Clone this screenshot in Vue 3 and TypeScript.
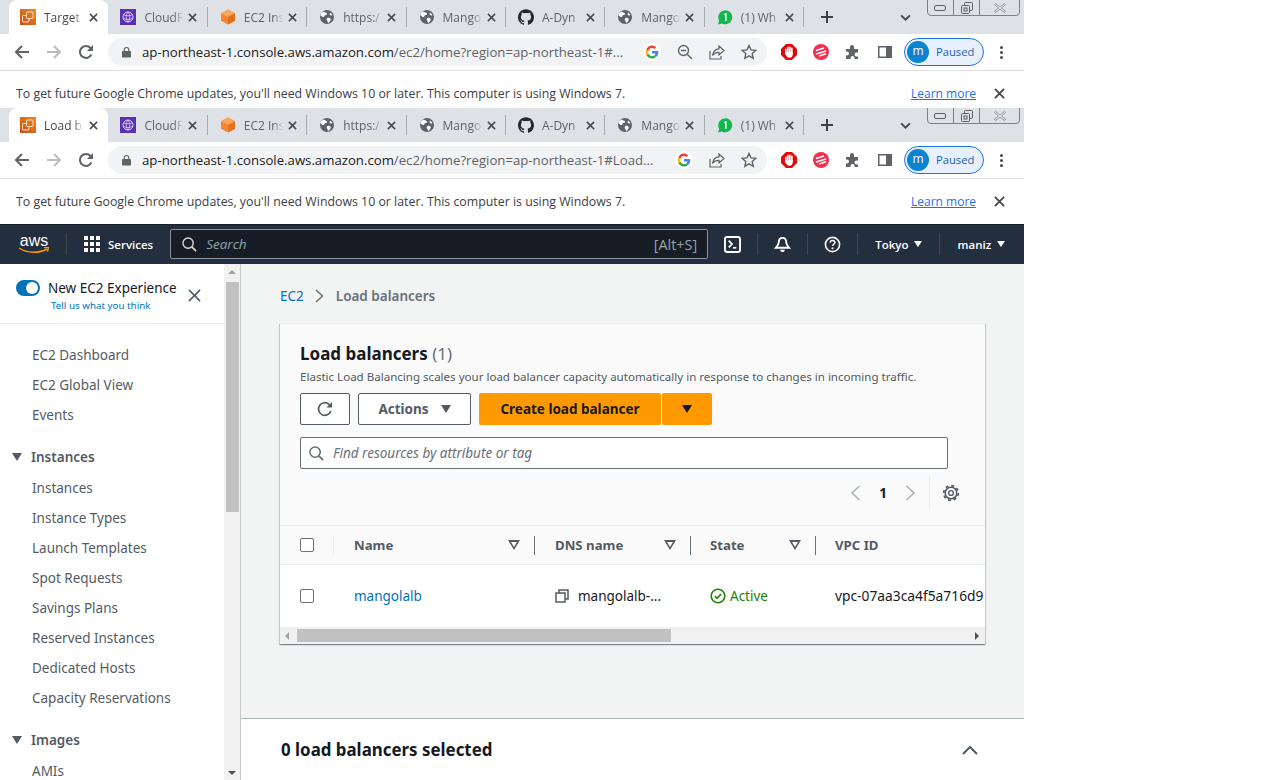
<script setup lang="ts">
interface Tab {
  icon: string
  title: string
}

const otherTabs: Tab[] = [
  { icon: 'cloudfront', title: 'CloudF' },
  { icon: 'cube', title: 'EC2 Ins' },
  { icon: 'globe', title: 'https:/' },
  { icon: 'globe', title: 'Mango' },
  { icon: 'github', title: 'A-Dyn' },
  { icon: 'globe', title: 'Mango ' },
  { icon: 'whatsapp', title: '(1) Wh' },
]

const browsers = [
  {
    active: 'Target',
    url: 'ap-northeast-1.console.aws.amazon.com/ec2/home?region=ap-northeast-1#...',
    zoomIcon: true,
    clipped: true,
  },
  {
    active: 'Load b',
    url: 'ap-northeast-1.console.aws.amazon.com/ec2/home?region=ap-northeast-1#Load...',
    zoomIcon: false,
    clipped: false,
  },
]

const topLinks = ['EC2 Dashboard', 'EC2 Global View', 'Events']
const instanceLinks = [
  'Instances',
  'Instance Types',
  'Launch Templates',
  'Spot Requests',
  'Savings Plans',
  'Reserved Instances',
  'Dedicated Hosts',
  'Capacity Reservations',
]
</script>

<template>
  <div class="page">
    <div v-for="b in browsers" :key="b.active" class="browser" :class="{ clipped: b.clipped }">
      <div class="tabstrip">
        <div class="tab active">
          <svg class="fav" viewBox="0 0 16 16">
            <defs>
              <linearGradient id="tg" x1="0" y1="1" x2="1" y2="0">
                <stop offset="0" stop-color="#c8511b" />
                <stop offset="1" stop-color="#f08a1d" />
              </linearGradient>
            </defs>
            <rect width="16" height="16" fill="url(#tg)" />
            <rect x="2.5" y="6.5" width="6.5" height="6.5" rx="1" fill="none" stroke="#fbe0c8" />
            <rect x="6.5" y="3" width="6.5" height="6.5" rx="1" fill="#e0741d" stroke="#fbe0c8" />
          </svg>
          <span class="tab-title">{{ b.active }}</span>
          <svg class="tab-x" viewBox="0 0 10 10"><path d="M1 1l8 8M9 1l-8 8" /></svg>
        </div>
        <div v-for="t in otherTabs" :key="t.title + t.icon" class="tab">
          <svg v-if="t.icon === 'cloudfront'" class="fav" viewBox="0 0 16 16">
            <rect width="16" height="16" fill="#5a30b5" />
            <circle cx="8" cy="8" r="5" fill="none" stroke="#e3d8f8" />
            <path d="M8 3c-2.4 3-2.4 7 0 10M8 3c2.4 3 2.4 7 0 10M4 5.800c2.600 1.400 5.400 1.400 8 0M3.500 9.500c3 1.300 6 1.300 9 0" fill="none" stroke="#e3d8f8" stroke-width=".8" />
          </svg>
          <svg v-else-if="t.icon === 'cube'" class="fav" viewBox="0 0 16 16">
            <path d="M8 .5l7 3.700v7.600l-7 3.700-7-3.700V4.200z" fill="#f58534" />
            <path d="M8 .5l7 3.700-7 3.800-7-3.800z" fill="#f9a65a" />
            <path d="M8 8l7-3.800v7.600l-7 3.700z" fill="#e3701f" />
          </svg>
          <svg v-else-if="t.icon === 'globe'" class="fav" viewBox="0 0 16 16">
            <circle cx="8" cy="8" r="7" fill="#5f6368" />
            <path d="M4.500 2.500c1 1 2.800.8 3.500 2 .5 1-1 1.500-2 1.800-1 .4-.4 1.700-1.500 1.700-1.200 0-2-1-3-1.800.3-1.600 1.300-3 3-3.700zM8.500 9c1.200-.5 3 .2 3.200 1.200.2 1.100-1.200 3-2.500 3.700-.8-.6-.4-1.800-1.200-2.600-.5-.7-.3-1.900.5-2.300zM11 3.500l2.500 2.300-1.500 1-1.500-1.300z" fill="#fff" />
          </svg>
          <svg v-else-if="t.icon === 'github'" class="fav" viewBox="0 0 24 24">
            <path fill="#24292e" d="M12 .297c-6.630 0-12 5.373-12 12 0 5.303 3.438 9.800 8.205 11.385.600.113.820-.258.820-.577 0-.285-.010-1.040-.015-2.040-3.338.724-4.042-1.610-4.042-1.610C4.422 18.070 3.633 17.700 3.633 17.700c-1.087-.744.084-.729.084-.729 1.205.084 1.838 1.236 1.838 1.236 1.070 1.835 2.809 1.305 3.495.998.108-.776.417-1.305.760-1.605-2.665-.300-5.466-1.332-5.466-5.930 0-1.310.465-2.380 1.235-3.220-.135-.303-.540-1.523.105-3.176 0 0 1.005-.322 3.300 1.230.960-.267 1.980-.399 3-.405 1.020.006 2.040.138 3 .405 2.280-1.552 3.285-1.230 3.285-1.230.645 1.653.240 2.873.120 3.176.765.840 1.230 1.910 1.230 3.220 0 4.610-2.805 5.625-5.475 5.920.420.360.810 1.096.810 2.220 0 1.606-.015 2.896-.015 3.286 0 .315.210.690.825.570C20.565 22.092 24 17.592 24 12.297c0-6.627-5.373-12-12-12" />
          </svg>
          <svg v-else class="fav" viewBox="0 0 16 16">
            <path d="M1 15.500l1.100-3.800a7 7 0 1 1 2.700 2.700z" fill="#12b84a" />
            <path d="M6.700 5.400L8.600 4h1v8H8V6z" fill="#fff" />
          </svg>
          <span class="tab-title">{{ t.title }}</span>
          <svg class="tab-x" viewBox="0 0 10 10"><path d="M1 1l8 8M9 1l-8 8" /></svg>
        </div>
        <svg class="new-tab" viewBox="0 0 12 12"><path d="M6 0v12M0 6h12" /></svg>
        <svg class="tab-search" viewBox="0 0 10 6"><path d="M1 1l4 4 4-4" /></svg>
        <div class="win-btns">
          <span class="win-btn"><svg width="14" height="8" viewBox="0 0 14 8"><rect x=".5" y="1.500" width="11" height="5" rx="1.500" /></svg></span>
          <span class="win-btn restore"><svg width="14" height="12" viewBox="0 0 14 12"><rect x="4.500" y=".5" width="8" height="8" rx="1" /><rect x="1.500" y="3.500" width="8" height="8" rx="1" fill="#dee1e6" /><rect x="4" y="6" width="3" height="3" /></svg></span>
          <span class="win-btn close"><svg width="12" height="10" viewBox="0 0 12 10"><path d="M1.500.5L6 4l4.500-3.500 1 1L7.500 5l4 3-1 1.500L6 6.200 1.500 9.500l-1-1.500 4-3-4-3.500z" /></svg></span>
        </div>
      </div>

      <div class="toolbar">
        <svg class="nav-ic" viewBox="0 0 16 16"><path d="M15 8H2M8 2L2 8l6 6" fill="none" stroke="#5f6368" stroke-width="2" /></svg>
        <svg class="nav-ic" viewBox="0 0 16 16"><path d="M1 8h13M8 2l6 6-6 6" fill="none" stroke="#babcbe" stroke-width="2" /></svg>
        <svg class="nav-ic" viewBox="0 0 16 16"><path d="M13.400 10.500A6 6 0 1 1 12.500 4L14.500 6" fill="none" stroke="#5f6368" stroke-width="2" /><path d="M15 1v6H9z" fill="#5f6368" /></svg>
        <div class="omnibox">
          <svg class="lock" viewBox="0 0 10 12"><path d="M2.500 5V3.500a2.500 2.500 0 0 1 5 0V5" fill="none" stroke="#5f6368" stroke-width="1.300" /><rect y="5" width="10" height="7" rx="1" fill="#5f6368" /></svg>
          <span class="url">{{ b.url.split('/ec2')[0] }}<span class="url-dim">/ec2{{ b.url.split('/ec2')[1] }}</span></span>
          <svg class="omni-ic g" viewBox="0 0 18 18">
            <circle cx="9" cy="9" r="9" fill="#fff" />
            <path d="M15.300 9.200c0-.5 0-.9-.1-1.300H9v2.500h3.500a3 3 0 0 1-1.300 2l2 1.600c1.300-1.200 2.100-2.900 2.100-4.800z" fill="#4285f4" />
            <path d="M9 15.500c1.700 0 3.200-.6 4.200-1.500l-2-1.600c-.6.400-1.300.6-2.200.6-1.700 0-3.100-1.100-3.600-2.600l-2.100 1.600a6.500 6.500 0 0 0 5.700 3.500z" fill="#34a853" />
            <path d="M5.400 10.900a3.900 3.900 0 0 1 0-2.800L3.300 6.500a6.500 6.500 0 0 0 0 5.900z" fill="#fbbc05" />
            <path d="M9 5.100c.9 0 1.800.3 2.400.9l1.800-1.800A6.300 6.300 0 0 0 9 2.500a6.500 6.500 0 0 0-5.700 4l2.100 1.600C5.900 6.300 7.300 5.100 9 5.100z" fill="#ea4335" />
          </svg>
          <svg v-if="b.zoomIcon" class="omni-ic" viewBox="0 0 16 16"><circle cx="6.500" cy="6.500" r="5" fill="none" stroke="#5f6368" stroke-width="1.400" /><path d="M10.200 10.200L15 15M4 6.500h5" stroke="#5f6368" stroke-width="1.400" /></svg>
          <svg class="omni-ic" viewBox="0 0 16 16"><path d="M1 7v8h11v-3" fill="none" stroke="#5f6368" stroke-width="1.200" /><path d="M10 2l5 4.500-5 4.500V8.300C7 8.300 5 9 3.500 11.500 4 7.500 6.500 5 10 4.800z" fill="none" stroke="#5f6368" stroke-width="1.200" /></svg>
          <svg class="omni-ic" viewBox="0 0 16 16"><path d="M8 1.500l2 4.400 4.800.5-3.600 3.200 1 4.700L8 11.900l-4.200 2.400 1-4.700L1.200 6.400 6 5.900z" fill="none" stroke="#5f6368" stroke-width="1.400" /></svg>
        </div>
        <svg class="ext" viewBox="0 0 16 16">
          <path d="M5 0h6l5 5v6l-5 5H5l-5-5V5z" fill="#e10a0a" />
          <g fill="#fff">
            <rect x="4" y="4.500" width="1.700" height="6" rx=".8" />
            <rect x="6" y="2.800" width="1.700" height="7" rx=".8" />
            <rect x="8" y="2.500" width="1.700" height="7" rx=".8" />
            <rect x="10" y="3.500" width="1.700" height="7" rx=".8" />
            <path d="M4 8h7.700v2.500c0 2-1.300 3.300-3.200 3.300-1.800 0-2.600-1-3.300-2.300L4 9.500z" />
          </g>
        </svg>
        <svg class="ext" viewBox="0 0 16 16"><circle cx="8" cy="8" r="8" fill="#f0304f" /><path d="M3 6.500l8-2.500M3 10l10-3M6 12l7-2.200" stroke="#fff" stroke-width="1.500" /></svg>
        <svg class="ext" viewBox="0 0 16 16"><path d="M1 5h4V3a2 2 0 0 1 4 0v2h4v3.500h-1.500a2 2 0 0 0 0 4H13V15H9.500v-1a2 2 0 0 0-4 0v1H1v-3.500h1a2 2 0 0 0 0-4H1z" fill="#5f6368" /></svg>
        <svg class="ext" viewBox="0 0 16 16"><rect x="1" y="2" width="14" height="12" fill="#5f6368" /><rect x="2.500" y="3.500" width="6.500" height="9" fill="#fff" /></svg>
        <div class="profile">
          <span class="avatar">m</span>
          <span class="paused">Paused</span>
        </div>
        <div class="menu-dots"><i></i><i></i><i></i></div>
      </div>

      <div class="infobar">
        <span class="info-text">To get future Google Chrome updates, you'll need Windows 10 or later. This computer is using Windows 7.</span>
        <a class="learn">Learn more</a>
        <svg class="info-x" viewBox="0 0 12 12"><path d="M1 1l10 10M11 1L1 11" /></svg>
      </div>
    </div>

    <header class="awsnav">
      <div class="aws-logo">
        <span>aws</span>
        <svg viewBox="0 0 32 7" width="32" height="7"><path d="M1 1c8 5.500 20 5.500 28 1" fill="none" stroke="#ff9900" stroke-width="1.500" /><path d="M26 .5l4.500 0-1 4" fill="none" stroke="#ff9900" stroke-width="1.300" /></svg>
      </div>
      <span class="nav-sep first"></span>
      <div class="grid-ic"><i v-for="n in 9" :key="n"></i></div>
      <span class="services">Services</span>
      <div class="aws-search">
        <svg width="15" height="15" viewBox="0 0 16 16"><circle cx="6.500" cy="6.500" r="5.500" fill="none" stroke="#d5dbdb" stroke-width="1.500" /><path d="M10.500 10.500L15 15" stroke="#d5dbdb" stroke-width="1.800" /></svg>
        <span class="search-ph">Search</span>
        <span class="search-key">[Alt+S]</span>
      </div>
      <svg class="nav-ic2 term" viewBox="0 0 18 18"><rect x="1" y="1" width="16" height="16" rx="2.500" fill="none" stroke="#fff" stroke-width="2" /><path d="M5 5l3.500 3.500L5 12" fill="none" stroke="#fff" stroke-width="1.800" /><path d="M9.500 12.500H13" stroke="#fff" stroke-width="1.800" /></svg>
      <span class="nav-sep"></span>
      <svg class="nav-ic2 bell" viewBox="0 0 18 18"><path d="M9 2c2.800 0 4 2.500 4 5 0 2 1.500 3.800 3 5.500H2C3.500 10.800 5 9 5 7c0-2.500 1.200-5 4-5z" fill="none" stroke="#fff" stroke-width="2" /><path d="M6.500 14.500c.3 1.800 1.300 2.500 2.500 2.500s2.200-.7 2.500-2.500" fill="#fff" /></svg>
      <span class="nav-sep"></span>
      <svg class="nav-ic2 help" viewBox="0 0 18 18"><circle cx="9" cy="9" r="7.500" fill="none" stroke="#fff" stroke-width="1.700" /><path d="M6.500 7c.1-1.500 1.200-2.200 2.500-2.200s2.500.8 2.500 2.100c0 1.900-2.500 1.800-2.500 3.800" fill="none" stroke="#fff" stroke-width="1.600" /><circle cx="9" cy="13" r="1.100" fill="#fff" /></svg>
      <span class="nav-sep"></span>
      <span class="menu-item tokyo">Tokyo<b class="caret"></b></span>
      <span class="nav-sep"></span>
      <span class="menu-item maniz">maniz<b class="caret"></b></span>
    </header>

    <div class="console">
      <aside class="sidebar">
        <div class="side-inner">
          <div class="exp">
            <span class="toggle"><i></i></span>
            <div class="exp-text">
              <div class="exp-title">New EC2 Experience</div>
              <div class="exp-link">Tell us what you think</div>
            </div>
            <svg class="exp-x" viewBox="0 0 14 14"><path d="M1 1l12 12M13 1L1 13" /></svg>
          </div>
          <nav class="side-nav">
            <a v-for="l in topLinks" :key="l" class="side-link">{{ l }}</a>
            <div class="side-head"><b class="tri"></b>Instances</div>
            <a v-for="l in instanceLinks" :key="l" class="side-link">{{ l }}</a>
            <div class="side-head"><b class="tri"></b>Images</div>
            <a class="side-link">AMIs</a>
          </nav>
        </div>
        <div class="vscroll">
          <b class="arrow up"></b>
          <div class="vthumb"></div>
          <b class="arrow down"></b>
        </div>
      </aside>

      <main class="main">
        <div class="crumbs">
          <a>EC2</a>
          <svg width="9" height="14" viewBox="0 0 9 14"><path d="M1 1l6.500 6L1 13" fill="none" stroke="#687078" stroke-width="1.500" /></svg>
          <span>Load balancers</span>
        </div>

        <section class="card">
          <div class="card-head">
            <h1>Load balancers <span>(1)</span></h1>
            <p>Elastic Load Balancing scales your load balancer capacity automatically in response to changes in incoming traffic.</p>
            <div class="actions">
              <button class="btn refresh">
                <svg width="16" height="16" viewBox="0 0 16 16"><path d="M13.800 10A6.300 6.300 0 1 1 12 3.300L14 5.300" fill="none" stroke="#545b64" stroke-width="1.700" /><path d="M15 1v5.500H9.500z" fill="#545b64" /></svg>
              </button>
              <button class="btn act">Actions<b class="caret dark"></b></button>
              <button class="btn primary create">Create load balancer</button>
              <button class="btn primary split"><b class="caret black"></b></button>
            </div>
            <div class="find">
              <svg width="15" height="15" viewBox="0 0 16 16"><circle cx="6.500" cy="6.500" r="5.500" fill="none" stroke="#687078" stroke-width="1.700" /><path d="M10.500 10.500L15 15" stroke="#687078" stroke-width="2" /></svg>
              <span>Find resources by attribute or tag</span>
            </div>
            <div class="pager">
              <svg width="11" height="16" viewBox="0 0 11 16"><path d="M9.500 1L2 8l7.500 7" fill="none" stroke="#aab7b8" stroke-width="1.700" /></svg>
              <span class="page-no">1</span>
              <svg width="11" height="16" viewBox="0 0 11 16"><path d="M1.500 1L9 8l-7.500 7" fill="none" stroke="#aab7b8" stroke-width="1.700" /></svg>
              <span class="pager-sep"></span>
              <svg width="18" height="18" viewBox="0 0 18 18">
                <circle cx="9" cy="9" r="5.800" fill="none" stroke="#545b64" stroke-width="1.500" />
                <circle cx="9" cy="9" r="7.300" fill="none" stroke="#545b64" stroke-width="1.800" stroke-dasharray="2.900 2.830" />
                <circle cx="9" cy="9" r="2.400" fill="none" stroke="#545b64" stroke-width="1.400" />
              </svg>
            </div>
          </div>

          <div class="table">
            <div class="row thead">
              <div class="cell check"><i class="box"></i><span class="soft-sep"></span></div>
              <div class="cell th">Name<b class="filter"></b></div>
              <div class="cell th">DNS name<b class="filter"></b></div>
              <div class="cell th tight">State<b class="filter"></b></div>
              <div class="cell th last tight">VPC ID</div>
            </div>
            <div class="row tbody">
              <div class="cell check"><i class="box"></i></div>
              <div class="cell"><a class="lb-link">mangolalb</a></div>
              <div class="cell dns">
                <svg width="14" height="14" viewBox="0 0 14 14"><rect x="4" y="1" width="9" height="9" fill="none" stroke="#545b64" stroke-width="1.500" /><rect x="1" y="4" width="9" height="9" fill="#fff" stroke="#545b64" stroke-width="1.500" /></svg>
                <span>mangolalb-...</span>
              </div>
              <div class="cell state tight">
                <svg width="16" height="16" viewBox="0 0 16 16"><circle cx="8" cy="8" r="6.800" fill="none" stroke="#1d8102" stroke-width="1.600" /><path d="M4.800 8l2.300 2.300 4-4.300" fill="none" stroke="#1d8102" stroke-width="1.600" /></svg>
                <span>Active</span>
              </div>
              <div class="cell vpc tight">vpc-07aa3ca4f5a716d9</div>
            </div>
          </div>

          <div class="hscroll">
            <b class="h-arrow left"></b>
            <div class="hthumb"></div>
            <b class="h-arrow right"></b>
          </div>
        </section>

        <div class="selected">
          <h2>0 load balancers selected</h2>
          <svg width="16" height="10" viewBox="0 0 16 10"><path d="M1 9l7-7 7 7" fill="none" stroke="#545b64" stroke-width="2" /></svg>
        </div>
      </main>
    </div>
  </div>
</template>

<style scoped>
.page {
  width: 1024px;
  height: 780px;
  overflow: hidden;
  display: flex;
  flex-direction: column;
  font-family: "Open Sans", "Liberation Sans", sans-serif;
}

/* browser chrome */
.browser {
  flex: none;
  height: 116px;
  overflow: hidden;
  background: #fff;
}
.browser.clipped {
  height: 108px;
}
.tabstrip {
  position: relative;
  height: 34px;
  display: flex;
  padding-left: 9px;
  background: #dee1e6;
}
.tab {
  position: relative;
  flex: none;
  width: 99.4px;
  height: 34px;
  display: flex;
  align-items: center;
  padding-left: 12px;
  box-sizing: border-box;
}
.tab::after {
  content: "";
  position: absolute;
  right: 0;
  top: 7px;
  height: 20px;
  width: 1px;
  background: #a7aaae;
}
.tab.active {
  padding-left: 11px;
  background: #fff;
  border-radius: 8px 8px 0 0;
}
.tab.active::after {
  display: none;
}
.fav {
  flex: none;
  width: 16px;
  height: 16px;
}
.tab-title {
  width: 41px;
  margin-left: 8px;
  overflow: hidden;
  white-space: nowrap;
  font-size: 12px;
  color: #5f6368;
  -webkit-mask-image: linear-gradient(to right, #000 72%, transparent 96%);
  mask-image: linear-gradient(to right, #000 72%, transparent 96%);
}
.tab.active .tab-title {
  color: #45484c;
}
.tab-x {
  flex: none;
  width: 9px;
  height: 9px;
  margin-left: 3px;
  fill: none;
  stroke: #45484c;
  stroke-width: 1.700;
}
.tab.active .tab-x {
  margin-left: 4px;
}
.new-tab {
  flex: none;
  width: 12px;
  height: 12px;
  align-self: center;
  margin-left: 17px;
  fill: none;
  stroke: #3c4043;
  stroke-width: 2;
}
.tab-search {
  flex: none;
  width: 11px;
  height: 7px;
  align-self: center;
  margin-left: 67px;
  fill: none;
  stroke: #45484c;
  stroke-width: 1.700;
}
.win-btns {
  position: absolute;
  top: -1px;
  left: 927px;
  width: 93px;
  height: 17px;
  display: flex;
  box-sizing: border-box;
  border: 1px solid #7d8084;
  border-radius: 0 0 4px 4px;
}
.win-btn {
  display: flex;
  align-items: center;
  justify-content: center;
  width: 25px;
  border-right: 1px solid #7d8084;
}
.win-btn.close {
  flex: 1;
  border-right: 0;
}
.win-btn svg {
  fill: none;
  stroke: #5b5e62;
}
.win-btn.close svg {
  fill: #eceef0;
  stroke: #7d8084;
  stroke-width: .8;
}
.toolbar {
  height: 36px;
  display: flex;
  align-items: center;
  box-sizing: content-box;
  border-bottom: 1px solid #dadce0;
  padding-left: 14px;
}
.nav-ic {
  flex: none;
  width: 16px;
  height: 16px;
  margin-right: 16px;
}
.omnibox {
  flex: none;
  width: 659px;
  height: 28px;
  margin-left: -2px;
  display: flex;
  align-items: center;
  padding: 0 10px 0 14px;
  box-sizing: border-box;
  border-radius: 14px;
  background: #f1f3f4;
}
.lock {
  flex: none;
  width: 9px;
  height: 12px;
}
.url {
  flex: 1;
  margin-left: 11px;
  min-width: 0;
  white-space: nowrap;
  font-size: 13.200px;
  color: #202124;
}
.url-dim {
  color: #5f6368;
}
.omni-ic {
  flex: none;
  width: 16px;
  height: 16px;
  margin-left: 16px;
}
.omni-ic.g {
  width: 18px;
  height: 18px;
}
.ext {
  flex: none;
  width: 16px;
  height: 16px;
  margin-right: 16px;
}
.omnibox + .ext {
  margin-left: 14px;
}
.profile {
  flex: none;
  width: 80px;
  height: 28px;
  margin-left: -5px;
  display: flex;
  align-items: center;
  box-sizing: border-box;
  border: 1px solid #1a73e8;
  border-radius: 14px;
  background: #e8f0fe;
}
.avatar {
  width: 22px;
  height: 22px;
  margin-left: 2px;
  border-radius: 50%;
  background: #0a84d0;
  color: #fff;
  font-size: 12px;
  line-height: 20px;
  text-align: center;
}
.paused {
  margin-left: 7px;
  padding-bottom: 1px;
  font-size: 11.200px;
  color: #1a5fb4;
}
.menu-dots {
  margin-left: 16px;
  display: flex;
  flex-direction: column;
  gap: 2px;
}
.menu-dots i {
  width: 3px;
  height: 3px;
  border-radius: 50%;
  background: #45484c;
}
.infobar {
  height: 45px;
  display: flex;
  align-items: center;
  padding-left: 16px;
  background: #fff;
}
.info-text {
  flex: none;
  width: 895px;
  font-size: 12.350px;
  color: #3c4043;
  white-space: nowrap;
}
.learn {
  flex: none;
  width: 83px;
  font-size: 12px;
  color: #1a73e8;
  text-decoration: underline;
}
.info-x {
  flex: none;
  width: 11px;
  height: 11px;
  fill: none;
  stroke: #45484c;
  stroke-width: 2;
}

/* aws top nav */
.awsnav {
  flex: none;
  height: 40px;
  box-sizing: border-box;
  display: flex;
  align-items: center;
  padding-bottom: 1px;
  background: #232f3e;
  border-top: 1px solid #161d26;
  color: #fff;
}
.aws-logo {
  width: 32px;
  margin-left: 18px;
  display: flex;
  flex-direction: column;
  align-items: center;
  color: #fff;
  line-height: 1;
}
.aws-logo span {
  font-family: "Liberation Sans", sans-serif;
  font-size: 16px;
  height: 12px;
  line-height: 11px;
}
.nav-sep {
  flex: none;
  width: 1px;
  height: 22px;
  background: #414750;
}
.nav-sep.first {
  margin-left: 16px;
}
.grid-ic {
  flex: none;
  margin-left: 17px;
  display: grid;
  grid-template-columns: repeat(3, 4px);
  gap: 2px;
}
.grid-ic i {
  width: 4px;
  height: 4px;
  background: #fff;
}
.services {
  margin-left: 8px;
  font-size: 11.500px;
  font-weight: 600;
}
.aws-search {
  flex: none;
  width: 538px;
  height: 30px;
  margin-left: 17px;
  box-sizing: border-box;
  display: flex;
  align-items: center;
  padding: 0 10px 0 11px;
  border: 1px solid #879596;
  border-radius: 2px;
  background: #161d26;
}
.search-ph {
  flex: 1;
  margin-left: 9px;
  font-size: 13.500px;
  font-style: italic;
  color: #95a5a6;
}
.search-key {
  font-size: 14.400px;
  color: #95a5a6;
}
.nav-ic2 {
  flex: none;
  width: 17px;
  height: 17px;
}
.term {
  margin: 0 16px;
}
.bell {
  margin: 0 16px;
}
.help {
  margin: 0 16px;
}
.menu-item {
  display: flex;
  align-items: center;
  font-size: 11.500px;
  font-weight: 600;
}
.tokyo {
  padding: 0 17px;
}
.maniz {
  padding-left: 17px;
}
.caret {
  display: block;
  width: 0;
  height: 0;
  margin-left: 6px;
  border-left: 4.500px solid transparent;
  border-right: 4.500px solid transparent;
  border-top: 6px solid #fff;
}
.caret.dark {
  margin-left: 12px;
  border-top-color: #545b64;
  border-left-width: 5.500px;
  border-right-width: 5.500px;
  border-top-width: 8px;
}
.caret.black {
  margin: 0;
  border-top-color: #16191f;
  border-left-width: 5.500px;
  border-right-width: 5.500px;
  border-top-width: 8px;
}

/* console body */
.console {
  flex: none;
  height: 516px;
  display: flex;
  background: #f2f3f3;
  color: #16191f;
  font-family: "Noto Sans", "Open Sans", sans-serif;
}
.sidebar {
  flex: none;
  width: 241px;
  height: 516px;
  display: flex;
  box-sizing: border-box;
  border-right: 1px solid #c6c8c8;
}
.side-inner {
  flex: none;
  width: 224px;
  background: #fff;
  overflow: hidden;
}
.exp {
  position: relative;
  height: 60px;
  box-sizing: border-box;
  padding: 16px 0 0 16px;
  display: flex;
  border-bottom: 1px solid #eaeded;
}
.toggle {
  flex: none;
  width: 24px;
  height: 16px;
  border-radius: 8px;
  background: #0073bb;
  position: relative;
}
.toggle i {
  position: absolute;
  right: 2px;
  top: 2px;
  width: 12px;
  height: 12px;
  border-radius: 50%;
  background: #fff;
}
.exp-text {
  margin-left: 8px;
}
.exp-title {
  font-size: 13.500px;
  line-height: 17px;
  color: #16191f;
  white-space: nowrap;
}
.exp-link {
  margin: 1px 0 0 3px;
  font-size: 9.800px;
  line-height: 16px;
  color: #0073bb;
  white-space: nowrap;
}
.exp-x {
  position: absolute;
  left: 188px;
  top: 25px;
  width: 13px;
  height: 13px;
  fill: none;
  stroke: #545b64;
  stroke-width: 1.700;
}
.side-nav {
  padding-top: 16px;
}
.side-link {
  display: block;
  height: 30px;
  padding-left: 32px;
  font-size: 13.500px;
  line-height: 30px;
  color: #545b64;
  white-space: nowrap;
}
.side-head {
  display: flex;
  align-items: center;
  height: 30px;
  margin: 12px 0 1px;
  padding-left: 12px;
  font-size: 13.500px;
  font-weight: 600;
  color: #545b64;
}
.tri {
  width: 0;
  height: 0;
  margin-right: 9px;
  border-left: 5.500px solid transparent;
  border-right: 5.500px solid transparent;
  border-top: 8px solid #545b64;
}
.vscroll {
  flex: none;
  width: 16px;
  display: flex;
  flex-direction: column;
  align-items: center;
  background: #f1f1f1;
}
.vthumb {
  width: 13px;
  height: 230px;
  margin-top: 8px;
  background: #c1c1c1;
}
.arrow {
  width: 0;
  height: 0;
  border-left: 4px solid transparent;
  border-right: 4px solid transparent;
}
.arrow.up {
  margin-top: 6px;
  border-bottom: 4px solid #a3a3a3;
}
.arrow.down {
  margin-top: auto;
  margin-bottom: 5px;
  border-top: 4px solid #505050;
}

.main {
  position: relative;
  flex: 1;
  min-width: 0;
  display: flex;
  flex-direction: column;
}
.crumbs {
  height: 59px;
  box-sizing: border-box;
  padding: 5px 0 0 39px;
  display: flex;
  align-items: center;
  font-size: 13.500px;
  color: #687078;
}
.crumbs a {
  color: #0073bb;
}
.crumbs svg {
  margin: 0 12px 0 11px;
}
.crumbs span {
  font-weight: 600;
}
.card {
  flex: none;
  width: 705px;
  margin-left: 39px;
  box-sizing: border-box;
  background: #fafafa;
  border-top: 1px solid #eaeded;
  box-shadow: 0 1px 1px 0 rgba(0, 28, 36, 0.3), 1px 1px 1px 0 rgba(0, 28, 36, 0.15), -1px 1px 1px 0 rgba(0, 28, 36, 0.15);
}
.card-head {
  height: 201px;
  box-sizing: border-box;
  padding: 18px 37px 0 20px;
}
.card-head h1 {
  margin: 0;
  font-size: 17px;
  line-height: 24px;
  font-weight: 700;
  color: #16191f;
}
.card-head h1 span {
  font-weight: 400;
  color: #687078;
}
.card-head p {
  margin: 2px 0 0;
  font-size: 11.550px;
  line-height: 18px;
  color: #545b64;
  white-space: nowrap;
}
.actions {
  margin-top: 7px;
  display: flex;
}
.btn {
  height: 32px;
  box-sizing: border-box;
  display: flex;
  align-items: center;
  justify-content: center;
  padding: 0;
  font-family: inherit;
  font-size: 13.500px;
  font-weight: 700;
  border-radius: 2px;
  border: 1px solid #545b64;
  background: #fff;
  color: #545b64;
}
.refresh {
  width: 50px;
}
.act {
  width: 113px;
  margin-left: 8px;
}
.primary {
  border: 0;
  background: #ff9900;
  color: #16191f;
}
.create {
  width: 182px;
  margin-left: 8px;
}
.split {
  width: 50px;
  margin-left: 1px;
}
.find {
  margin-top: 12px;
  height: 32px;
  box-sizing: border-box;
  display: flex;
  align-items: center;
  padding-left: 8px;
  border: 1px solid #687078;
  border-radius: 2px;
  background: #fff;
}
.find span {
  margin-left: 9px;
  font-size: 13.500px;
  font-style: italic;
  color: #687078;
}
.pager {
  margin-top: 7px;
  height: 33px;
  display: flex;
  align-items: center;
  justify-content: flex-end;
}
.page-no {
  width: 44px;
  text-align: center;
  font-size: 13.500px;
  font-weight: 700;
  color: #16191f;
}
.pager-sep {
  width: 1px;
  height: 33px;
  margin: 0 12px 0 13px;
  background: #eaeded;
}
.pager svg:last-child {
  margin-right: -12px;
}
.table {
  overflow: hidden;
  border-top: 1px solid #eaeded;
}
.row {
  display: grid;
  grid-template-columns: 54px 201px 156px 125px 300px;
  width: 836px;
}
.thead {
  height: 39px;
  box-sizing: border-box;
  background: #fafafa;
  border-bottom: 1px solid #eaeded;
}
.tbody {
  height: 62px;
  background: #fff;
}
.cell {
  position: relative;
  display: flex;
  align-items: center;
  padding-left: 20px;
  font-size: 13.500px;
  color: #16191f;
  white-space: nowrap;
}
.cell.tight {
  padding-left: 19px;
}
.th {
  font-size: 13.200px;
  font-weight: 700;
  color: #545b64;
  box-sizing: border-box;
}
.th::after {
  content: "";
  position: absolute;
  right: 0;
  top: 10px;
  height: 19px;
  width: 1px;
  background: #687078;
}
.th.last::after {
  display: none;
}
.filter {
  position: absolute;
  right: 15px;
  top: 14px;
  width: 0;
  height: 0;
  border-left: 6px solid transparent;
  border-right: 6px solid transparent;
  border-top: 10px solid #545b64;
}
.filter::after {
  content: "";
  position: absolute;
  left: -3px;
  top: -8.500px;
  width: 0;
  height: 0;
  border-left: 3px solid transparent;
  border-right: 3px solid transparent;
  border-top: 5px solid #fafafa;
}
.box {
  display: block;
  width: 14px;
  height: 14px;
  box-sizing: border-box;
  border: 1px solid #687078;
  border-radius: 2px;
  background: #fff;
}
.soft-sep {
  position: absolute;
  right: 0;
  top: 10px;
  width: 1px;
  height: 19px;
  background: #eaeded;
}
.lb-link {
  color: #0073bb;
}
.dns svg {
  margin-right: 9px;
}
.state {
  color: #1d8102;
}
.state svg {
  margin-right: 4px;
}
.vpc {
  padding-bottom: 1px;
  font-size: 13.800px;
}
.hscroll {
  height: 17px;
  position: relative;
  display: flex;
  align-items: center;
  background: #f1f1f1;
}
.hthumb {
  position: absolute;
  left: 17px;
  top: 2px;
  width: 374px;
  height: 13px;
  background: #c1c1c1;
}
.h-arrow {
  position: absolute;
  top: 5px;
  width: 0;
  height: 0;
  border-top: 4px solid transparent;
  border-bottom: 4px solid transparent;
}
.h-arrow.left {
  left: 5px;
  border-right: 4px solid #a3a3a3;
}
.h-arrow.right {
  right: 6px;
  border-left: 4px solid #505050;
}
.selected {
  flex: none;
  height: 62px;
  margin-top: auto;
  box-sizing: border-box;
  display: flex;
  align-items: center;
  justify-content: space-between;
  padding: 0 46px 0 40px;
  background: #fff;
  border-top: 1px solid #aab7b8;
}
.selected h2 {
  margin: 0;
  font-size: 16.900px;
  font-weight: 700;
  color: #16191f;
}
</style>

<style>
html,
body {
  background: #fff;
  overflow: hidden;
}
</style>
